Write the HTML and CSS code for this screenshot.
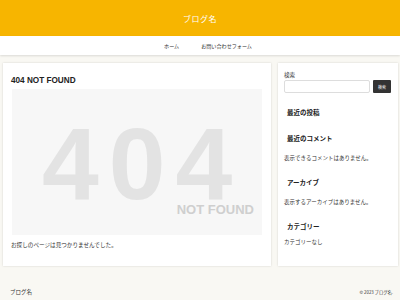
FILE: index.html
```html
<!DOCTYPE html>
<html lang="ja">
<head>
    <meta charset="UTF-8">
    <meta name="viewport" content="width=device-width, initial-scale=1.0">
    <title>ページが見つかりませんでした | ブログ名</title>
    <link rel="stylesheet" href="styles.css">
</head>
<body>
    <header class="site-header">
        <div class="site-title">ブログ名</div>
    </header>
    <nav class="global-nav">
        <a href="#">ホーム</a>
        <a href="#">お問い合わせフォーム</a>
    </nav>
    <div class="container">
        <main class="main-card">
            <h1 class="entry-title">404 NOT FOUND</h1>
            <div class="not-found-image">
                <span class="big">404</span>
                <span class="small">NOT FOUND</span>
            </div>
            <p class="message">お探しのページは見つかりませんでした。</p>
        </main>
        <aside class="sidebar">
            <div class="search-label">検索</div>
            <div class="search-form">
                <input type="text" class="search-input">
                <button class="search-button">検索</button>
            </div>
            <h3 class="widget-title first">最近の投稿</h3>
            <h3 class="widget-title">最近のコメント</h3>
            <p class="widget-text">表示できるコメントはありません。</p>
            <h3 class="widget-title">アーカイブ</h3>
            <p class="widget-text">表示するアーカイブはありません。</p>
            <h3 class="widget-title">カテゴリー</h3>
            <p class="widget-text last">カテゴリーなし</p>
        </aside>
    </div>
    <footer class="site-footer">
        <div class="footer-name">ブログ名</div>
        <div class="copyright">© 2023 ブログ名.</div>
    </footer>
</body>
</html>
```

FILE: styles.css
```css
body {
    margin: 0;
    background-color: #f9f8f3;
    font-family: "Noto Sans CJK JP", "Liberation Sans", sans-serif;
    color: #333;
}

.site-header {
    background-color: #f7b500;
    height: 36px;
    display: flex;
    align-items: center;
    justify-content: center;
}

.site-title {
    color: #fff;
    font-size: 8px;
    letter-spacing: 0.5px;
}

.global-nav {
    background-color: #fff;
    height: 19px;
    display: flex;
    align-items: center;
    justify-content: center;
    gap: 22px;
    padding-left: 16px;
    box-shadow: 0 1px 2px rgba(0, 0, 0, 0.12);
}

.global-nav a {
    color: #333;
    text-decoration: none;
    font-size: 5.1px;
}

.container {
    display: flex;
    gap: 7px;
    padding: 8px 2px 0 3px;
    align-items: stretch;
}

.main-card {
    width: 268px;
    height: 203px;
    box-sizing: border-box;
    background-color: #fff;
    padding: 13px 9px 0 8px;
    box-shadow: 0 0 2px rgba(0, 0, 0, 0.15);
}

.entry-title {
    font-family: "Liberation Sans", sans-serif;
    font-size: 8.2px;
    font-weight: bold;
    margin: 0 0 4px 0;
    color: #222;
}

.not-found-image {
    margin-left: 1px;
    height: 146px;
    background-color: #f7f7f7;
    position: relative;
    overflow: hidden;
    font-family: "Liberation Sans", sans-serif;
    font-weight: bold;
}

.not-found-image .big {
    position: absolute;
    left: 30px;
    top: 45px;
    font-size: 102px;
    line-height: 0.6;
    color: #e3e3e3;
    letter-spacing: 10px;
}

.not-found-image .small {
    position: absolute;
    right: 8px;
    top: 116px;
    font-size: 13px;
    line-height: 0.8;
    color: #cfcfcf;
}

.message {
    font-size: 5.6px;
    margin: 6px 0 0 0;
}

.sidebar {
    width: 120px;
    height: 203px;
    box-sizing: border-box;
    background-color: #fff;
    padding: 8px 7px 0 6px;
    box-shadow: 0 0 2px rgba(0, 0, 0, 0.15);
}

.search-label {
    font-size: 5.5px;
    line-height: 8px;
}

.search-form {
    display: flex;
    gap: 3px;
    margin-top: 1px;
}

.search-input {
    width: 86px;
    height: 13px;
    box-sizing: border-box;
    border: 1px solid #ddd;
    border-radius: 2px;
    padding: 0;
    margin: 0;
}

.search-button {
    width: 18px;
    height: 13px;
    background-color: #333;
    color: #fff;
    border: none;
    border-radius: 1px;
    font-size: 4px;
    padding: 0;
    font-family: "Noto Sans CJK JP", sans-serif;
}

.widget-title {
    font-size: 6.5px;
    font-weight: bold;
    margin: 15px 0 0 3px;
    line-height: 10px;
    color: #222;
}

.widget-title.first {
    margin-top: 14px;
}

.widget-title:nth-of-type(2) {
    margin-top: 16px;
}

.widget-text {
    font-size: 5.5px;
    margin: 11px 0 0 0;
    line-height: 8px;
}

.widget-text.last {
    margin-top: 7px;
}

.site-footer {
    display: flex;
    justify-content: space-between;
    align-items: center;
    padding: 22px 7px 0 10px;
}

.footer-name {
    font-size: 5.5px;
}

.copyright {
    font-size: 4.3px;
}
```
